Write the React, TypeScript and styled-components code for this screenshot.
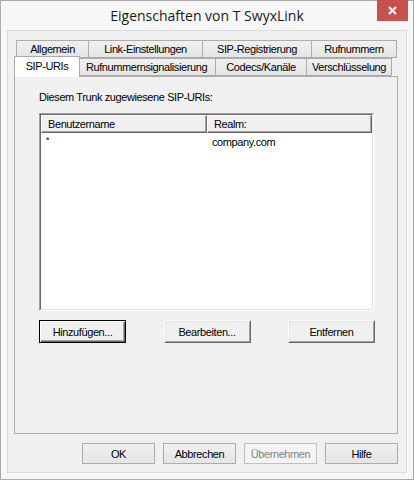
import styled, { createGlobalStyle } from "styled-components";

const GlobalStyle = createGlobalStyle`
	html, body {
		margin: 0;
		padding: 0;
		background: #ffffff;
	}
	* {
		box-sizing: border-box;
	}
`;

const Window = styled.div`
	position: relative;
	width: 414px;
	height: 480px;
	border: 1px solid #ababab;
	background: #f7f7f7;
	display: flex;
	flex-direction: column;
	padding: 0 6px 6px;
	font-family: "Liberation Sans", Arial, sans-serif;
	font-size: 11px;
	letter-spacing: -0.4px;
	color: #000;
`;

const TitleBar = styled.div`
	height: 29px;
	display: flex;
	align-items: center;
	justify-content: center;
	padding-bottom: 1px;
	font-family: "Open Sans", "Noto Sans", sans-serif;
	font-size: 14px;
	letter-spacing: 0;
	color: #1a1a1a;
`;

const CloseButton = styled.div`
	position: absolute;
	top: -1px;
	right: 5px;
	width: 31px;
	height: 21px;
	background: #c75050;
	display: flex;
	align-items: center;
	justify-content: center;

	svg {
		width: 9px;
		height: 9px;
	}
`;

const Client = styled.div`
	flex: 1;
	border: 1px solid #dadada;
	background: #f0f0f0;
	padding: 9px 8px 7px 6px;
	display: flex;
	flex-direction: column;
`;

const TabStrip = styled.div`
	display: flex;
	flex-direction: column;
	padding-left: 2px;
`;

const TabRow = styled.div`
	display: flex;
	height: 18px;
`;

const Tab = styled.div<{ $w: number; $active?: boolean }>`
	width: ${(p) => p.$w}px;
	height: ${(p) => (p.$active ? 21 : 18)}px;
	margin-left: -1px;
	${(p) => (p.$active ? "margin: -2px -2px -1px -3px;" : "")}
	position: relative;
	z-index: ${(p) => (p.$active ? 2 : 0)};
	border: 1px solid #acacac;
	border-bottom: ${(p) => (p.$active ? "none" : "1px solid #acacac")};
	background: ${(p) =>
		p.$active ? "#ffffff" : "linear-gradient(#f0f0f0, #e5e5e5)"};
	display: flex;
	align-items: center;
	justify-content: center;
	padding-bottom: ${(p) => (p.$active ? 2 : 0)}px;
	white-space: nowrap;

	&:first-child {
		margin-left: ${(p) => (p.$active ? -2 : 0)}px;
	}
`;

const Panel = styled.div`
	height: 358px;
	margin-right: 0;
	border: 1px solid #acacac;
	background: #f0f0f0;
	padding: 14px 22px 0 24px;
	display: flex;
	flex-direction: column;
`;

const Label = styled.div`
	height: 22px;
	line-height: 13px;
`;

const ListView = styled.div`
	width: 335px;
	height: 198px;
	border: 1px solid;
	border-color: #a0a0a0 #ffffff #ffffff #a0a0a0;
	background: #ffffff;
`;

const ListInner = styled.div`
	height: 100%;
	border: 1px solid;
	border-color: #696969 #e3e3e3 #e3e3e3 #696969;
	display: flex;
	flex-direction: column;
`;

const Columns = styled.div`
	display: grid;
	grid-template-columns: 166px 1fr;
`;

const HeaderCell = styled.div`
	height: 18px;
	background: #f0f0f0;
	border: 1px solid;
	border-color: #ffffff #696969 #696969 #ffffff;
	box-shadow: inset -1px -1px 0 #a0a0a0;
	padding: 0 6px;
	display: flex;
	align-items: center;
`;

const Cell = styled.div`
	height: 17px;
	padding: 0 5px;
	display: flex;
	align-items: center;
	white-space: nowrap;
`;

const Star = styled.span`
	font-size: 9px;
	margin-top: -3px;
`;

const ActionRow = styled.div`
	width: 336px;
	margin-top: 9px;
	display: flex;
	justify-content: space-between;
`;

const ClassicButton = styled.div<{ $default?: boolean }>`
	width: 87px;
	height: 23px;
	background: #f0f0f0;
	border: 1px solid;
	border-color: ${(p) =>
		p.$default ? "#000000" : "#ffffff #696969 #696969 #ffffff"};
	box-shadow: ${(p) =>
		p.$default
			? "inset 1px 1px 0 #ffffff, inset -1px -1px 0 #696969, inset -2px -2px 0 #a0a0a0"
			: "inset 1px 1px 0 #e3e3e3, inset -1px -1px 0 #a0a0a0"};
	display: flex;
	align-items: center;
	justify-content: center;
`;

const Footer = styled.div`
	margin-top: 9px;
	display: flex;
	justify-content: flex-end;
	gap: 8px;
	padding-right: 0;
`;

const DialogButton = styled.div<{ $disabled?: boolean }>`
	width: 73px;
	height: 21px;
	border: 1px solid ${(p) => (p.$disabled ? "#bfbfbf" : "#acacac")};
	background: ${(p) =>
		p.$disabled ? "#f4f4f4" : "linear-gradient(#f0f0f0, #e5e5e5)"};
	color: ${(p) => (p.$disabled ? "#838383" : "#000")};
	display: flex;
	align-items: center;
	justify-content: center;
`;

const backTabs = [
	{ label: "Allgemein", w: 73 },
	{ label: "Link-Einstellungen", w: 115 },
	{ label: "SIP-Registrierung", w: 110 },
	{ label: "Rufnummern", w: 86 },
];

const frontTabs = [
	{ label: "SIP-URIs", w: 66, active: true },
	{ label: "Rufnummernsignalisierung", w: 139 },
	{ label: "Codecs/Kanäle", w: 92 },
	{ label: "Verschlüsselung", w: 86 },
];

const App = () => {
	return (
		<>
			<GlobalStyle />
			<Window>
				<TitleBar>Eigenschaften von T SwyxLink</TitleBar>
				<CloseButton>
					<svg viewBox="0 0 9 9">
						<path d="M1 1 L8 8 M8 1 L1 8" stroke="#fff" strokeWidth="2" />
					</svg>
				</CloseButton>
				<Client>
					<TabStrip>
						<TabRow>
							{backTabs.map((t) => (
								<Tab key={t.label} $w={t.w}>
									{t.label}
								</Tab>
							))}
						</TabRow>
						<TabRow>
							{frontTabs.map((t) => (
								<Tab key={t.label} $w={t.w} $active={t.active}>
									{t.label}
								</Tab>
							))}
						</TabRow>
					</TabStrip>
					<Panel>
						<Label>Diesem Trunk zugewiesene SIP-URIs:</Label>
						<ListView>
							<ListInner>
								<Columns>
									<HeaderCell>Benutzername</HeaderCell>
									<HeaderCell>Realm:</HeaderCell>
									<Cell>
										<Star>*</Star>
									</Cell>
									<Cell>company.com</Cell>
								</Columns>
							</ListInner>
						</ListView>
						<ActionRow>
							<ClassicButton $default>Hinzufügen...</ClassicButton>
							<ClassicButton>Bearbeiten...</ClassicButton>
							<ClassicButton>Entfernen</ClassicButton>
						</ActionRow>
					</Panel>
					<Footer>
						<DialogButton>OK</DialogButton>
						<DialogButton>Abbrechen</DialogButton>
						<DialogButton $disabled>Übernehmen</DialogButton>
						<DialogButton>Hilfe</DialogButton>
					</Footer>
				</Client>
			</Window>
		</>
	);
};

export default App;
